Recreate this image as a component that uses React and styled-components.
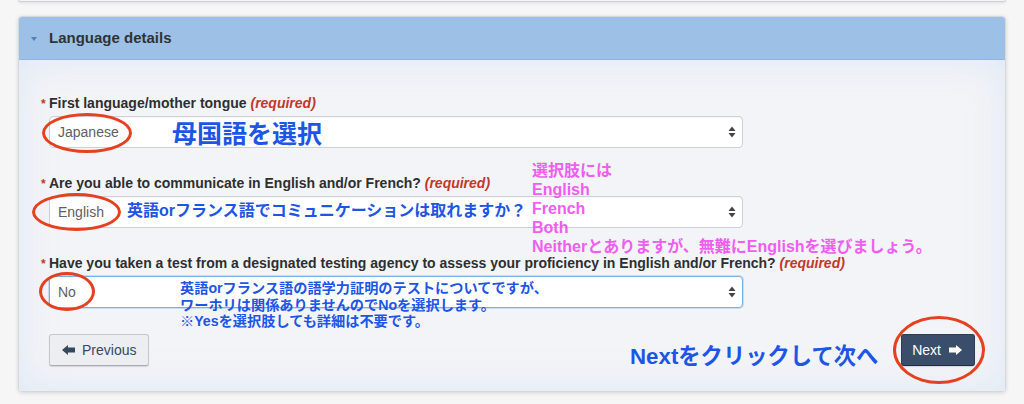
import React from "react";
import styled, { createGlobalStyle } from "styled-components";

const GlobalStyle = createGlobalStyle`
  html, body { margin: 0; padding: 0; background: #f6f6f6; }
  body { font-family: "Liberation Sans", Arial, "Noto Sans CJK JP", sans-serif; }
  * { box-sizing: border-box; }
`;

const Page = styled.div`
  position: relative;
  width: 1024px;
  height: 404px;
  overflow: hidden;
  background: #f6f6f6;
`;

const PrevPanelEdge = styled.div`
  margin: 0 18px;
  height: 2px;
  background: #f3f5f8;
  border: 1px solid #cfd1d4;
  border-top: none;
  border-radius: 0 0 4px 4px;
  box-shadow: 0 1px 3px rgba(0, 0, 0, 0.12);
`;

const Panel = styled.section`
  margin: 14px 18px 0;
  border: 1px solid #d4d7dc;
  border-radius: 4px;
  overflow: hidden;
  box-shadow: 0 1px 4px rgba(0, 0, 0, 0.14);
`;

const Header = styled.header`
  height: 43px;
  display: flex;
  align-items: center;
  gap: 12px;
  padding-left: 12px;
  background: #9dc1e6;
  border-bottom: 1px solid #8fb5de;
`;

const Caret = styled.span`
  width: 0;
  height: 0;
  border-left: 3px solid transparent;
  border-right: 3px solid transparent;
  border-top: 4px solid #4f80b8;
  margin-top: 1px;
`;

const Title = styled.h2`
  margin: 0 0 2px;
  font-size: 15px;
  font-weight: 700;
  color: #2f3337;
`;

const Body = styled.div`
  padding: 34px 30px 25px 30px;
  background: #f3f4f7;
  box-shadow: inset 0 0 40px rgba(200, 220, 246, 0.45);
`;

const Group = styled.div`
  margin-bottom: 26px;
`;

const Label = styled.label`
  display: block;
  height: 18px;
  line-height: 18px;
  margin-bottom: 4px;
  font-size: 14px;
  font-weight: 700;
  color: #2d2f31;
`;

const Star = styled.span`
  display: inline-block;
  width: 8px;
  margin-left: -8px;
  color: #c0392b;
  font-size: 12px;
`;

const Required = styled.em`
  color: #c0392b;
  font-weight: 700;
  font-style: italic;
`;

const Select = styled.div`
  width: 694px;
  height: 32px;
  display: flex;
  align-items: center;
  justify-content: space-between;
  padding: 0 6px 0 8px;
  background: #fff;
  border: 1px solid ${(p) => (p.$focused ? "#79b0e6" : "#cdd0d4")};
  border-radius: 4px;
  box-shadow: ${(p) =>
    p.$focused ? "0 0 0 1px rgba(120, 176, 232, 0.35)" : "inset 0 1px 1px rgba(0,0,0,0.04)"};
  font-size: 14px;
  color: #606060;
`;

const Arrows = () => (
  <svg width="8" height="12" viewBox="0 0 8 12">
    <path d="M4 0.5 L7.5 5 L0.5 5 Z" fill="#444" />
    <path d="M4 11.5 L7.5 7 L0.5 7 Z" fill="#444" />
  </svg>
);

const FatArrow = ({ dir }) => (
  <svg width="13" height="10" viewBox="0 0 13 10">
    <path
      d={
        dir === "left"
          ? "M0 5 L6 0 L6 2.6 L13 2.6 L13 7.4 L6 7.4 L6 10 Z"
          : "M13 5 L7 0 L7 2.6 L0 2.6 L0 7.4 L7 7.4 L7 10 Z"
      }
      fill="currentColor"
    />
  </svg>
);

const ButtonRow = styled.div`
  display: flex;
  justify-content: space-between;
  align-items: center;
`;

const Button = styled.button`
  height: 32px;
  display: inline-flex;
  align-items: center;
  gap: ${(p) => (p.$primary ? "8px" : "7px")};
  padding: ${(p) => (p.$primary ? "0 12px 0 10px" : "0 12px 0 12px")};
  font-family: "Liberation Sans", Arial, sans-serif;
  font-size: 14px;
  border-radius: 3px;
  border: 1px solid ${(p) => (p.$primary ? "#2c3d55" : "#c4c8cd")};
  border-bottom-color: ${(p) => (p.$primary ? "#1f2d40" : "#a9adb3")};
  background: ${(p) => (p.$primary ? "#3a4e6c" : "#eceef1")};
  color: ${(p) => (p.$primary ? "#ffffff" : "#34495e")};
  box-shadow: 0 1px 1px rgba(0, 0, 0, 0.12);
`;

const Ring = styled.span`
  position: absolute;
  left: ${(p) => p.$x}px;
  top: ${(p) => p.$y}px;
  width: ${(p) => p.$w}px;
  height: ${(p) => p.$h}px;
  border: 3px solid #e5401f;
  border-radius: 50%;
  pointer-events: none;
`;

const Note = styled.div`
  position: absolute;
  left: ${(p) => p.$x}px;
  top: ${(p) => p.$y}px;
  font-family: "Liberation Sans", Arial, "Noto Sans CJK JP", sans-serif;
  font-size: ${(p) => p.$size}px;
  line-height: ${(p) => p.$lh}px;
  font-weight: 700;
  color: ${(p) => p.$color};
  white-space: nowrap;
`;

const BLUE = "#1d55e6";
const PINK = "#ef5ef0";

const fields = [
  { label: "First language/mother tongue", value: "Japanese" },
  { label: "Are you able to communicate in English and/or French?", value: "English" },
  {
    label:
      "Have you taken a test from a designated testing agency to assess your proficiency in English and/or French?",
    value: "No",
    focused: true,
  },
];

export default function App() {
  return (
    <Page>
      <GlobalStyle />
      <PrevPanelEdge />
      <Panel>
        <Header>
          <Caret />
          <Title>Language details</Title>
        </Header>
        <Body>
          {fields.map((f) => (
            <Group key={f.label}>
              <Label>
                <Star>*</Star>
                {f.label} <Required>(required)</Required>
              </Label>
              <Select $focused={f.focused}>
                <span>{f.value}</span>
                <Arrows />
              </Select>
            </Group>
          ))}
          <ButtonRow>
            <Button>
              <FatArrow dir="left" />
              Previous
            </Button>
            <Button $primary>
              Next
              <FatArrow dir="right" />
            </Button>
          </ButtonRow>
        </Body>
      </Panel>

      <Ring $x={42} $y={113} $w={90} $h={40} />
      <Ring $x={32} $y={193} $w={89} $h={38} />
      <Ring $x={39} $y={272} $w={56} $h={39} />
      <Ring $x={893} $y={316} $w={92} $h={68} />

      <Note $x={172} $y={121} $size={25} $lh={26} $color={BLUE}>
        母国語を選択
      </Note>
      <Note $x={127} $y={202} $size={16} $lh={18} $color={BLUE}>
        英語orフランス語でコミュニケーションは取れますか？
      </Note>
      <Note $x={532} $y={161} $size={16} $lh={19} $color={PINK}>
        選択肢には
        <br />
        English
        <br />
        French
        <br />
        Both
        <br />
        Neitherとありますが、無難にEnglishを選びましょう。
      </Note>
      <Note $x={180} $y={280} $size={14.2} $lh={16.5} $color={BLUE}>
        英語orフランス語の語学力証明のテストについてですが、
        <br />
        ワーホリは関係ありませんのでNoを選択します。
        <br />
        ※Yesを選択肢しても詳細は不要です。
      </Note>
      <Note $x={630} $y={344} $size={22.3} $lh={26} $color={BLUE}>
        Nextをクリックして次へ
      </Note>
    </Page>
  );
}
